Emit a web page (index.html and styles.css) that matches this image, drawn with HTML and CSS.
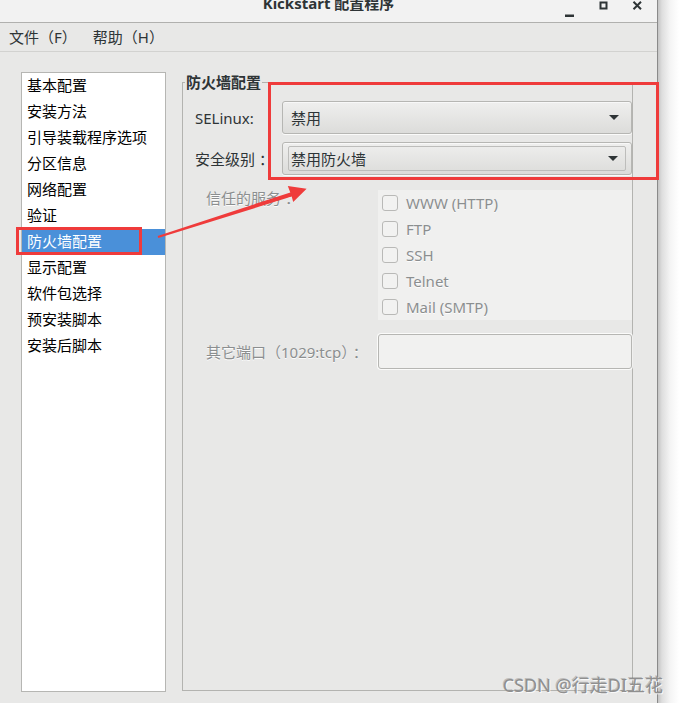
FILE: index.html
```html
<!DOCTYPE html>
<html lang="zh-CN">
<head>
<meta charset="utf-8">
<title>Kickstart 配置程序</title>
<link rel="stylesheet" href="styles.css">
</head>
<body>
<div class="screen">
  <div class="window">
    <div class="titlebar">
      <span></span>
      <span class="title">Kickstart 配置程序</span>
      <div class="controls">
        <svg width="82" height="22" viewBox="0 0 82 22">
          <rect x="3" y="14.5" width="9" height="2.5" fill="#2e3436"/>
          <rect x="38.5" y="2.5" width="6" height="6" fill="none" stroke="#2e3436" stroke-width="2"/>
          <path d="M71.5 1.8 L79 9.2 M79 1.8 L71.5 9.2" stroke="#2e3436" stroke-width="2"/>
        </svg>
      </div>
    </div>
    <div class="menubar">
      <span class="menu">文件（F）</span>
      <span class="menu">帮助（H）</span>
    </div>
    <div class="content">
      <ul class="sidebar">
        <li>基本配置</li>
        <li>安装方法</li>
        <li>引导装载程序选项</li>
        <li>分区信息</li>
        <li>网络配置</li>
        <li>验证</li>
        <li class="selected">防火墙配置</li>
        <li>显示配置</li>
        <li>软件包选择</li>
        <li>预安装脚本</li>
        <li>安装后脚本</li>
      </ul>
      <fieldset class="frame">
        <legend>防火墙配置</legend>
        <div class="top-grid">
          <span class="label">SELinux:</span>
          <div class="combo"><span class="combo-text">禁用</span><span class="caret"></span></div>
          <span class="label">安全级别<span class="colon">：</span></span>
          <div class="combo focused"><div class="focus-ring"><span class="combo-text">禁用防火墙</span><span class="caret"></span></div></div>
        </div>
        <div class="bottom-grid">
          <span class="label disabled services-label">信任的服务<span class="colon">：</span></span>
          <div class="checklist">
            <div class="check"><span class="box"></span><span class="disabled">WWW (HTTP)</span></div>
            <div class="check"><span class="box"></span><span class="disabled">FTP</span></div>
            <div class="check"><span class="box"></span><span class="disabled">SSH</span></div>
            <div class="check"><span class="box"></span><span class="disabled">Telnet</span></div>
            <div class="check"><span class="box"></span><span class="disabled">Mail (SMTP)</span></div>
          </div>
          <span class="label disabled port-label">其它端口（1029:tcp）<span class="colon">：</span></span>
          <div class="entry"></div>
        </div>
      </fieldset>
    </div>
  </div>
  <div class="shadow"></div>
  <svg class="annotation" width="679" height="703" viewBox="0 0 679 703">
    <rect x="17.5" y="228.5" width="123" height="25" fill="none" stroke="#ef3b3b" stroke-width="3"/>
    <rect x="269.5" y="83.5" width="388" height="95" fill="none" stroke="#ef3b3b" stroke-width="3"/>
    <polygon points="157.7,236.1 290.3,192.4 287.8,185.9 306.6,188.7 293.2,202.1 291.7,196.6 158.3,237.9" fill="#ef3b3b"/>
  </svg>
  <div class="watermark">CSDN @行走DI五花</div>
</div>
</body>
</html>
```
FILE: styles.css
```css
* { box-sizing: border-box; }

html, body {
  margin: 0;
  padding: 0;
  background: #ffffff;
}

body {
  font-family: "Noto Sans", "Noto Sans CJK SC", sans-serif;
  font-size: 15px;
  color: #2e3436;
}

.screen {
  position: relative;
  width: 679px;
  height: 703px;
  display: flex;
  overflow: hidden;
}

.window {
  width: 658px;
  height: 703px;
  border-right: 1px solid #8a8a8a;
  background: #e8e8e7;
  display: flex;
  flex-direction: column;
}

.shadow {
  flex: 1;
  background: linear-gradient(to right, #c4c4c4 0, #dedede 4px, #f4f4f4 12px, #ffffff 21px);
}

.titlebar {
  height: 23px;
  background: #f2f2f2;
  border-bottom: 1px solid #b0b0ae;
  display: grid;
  grid-template-columns: 1fr auto 1fr;
  align-items: start;
}

.title {
  font-weight: bold;
  font-size: 15px;
  line-height: 15px;
  margin-top: -4px;
  color: #2e3436;
  white-space: nowrap;
}

.controls {
  display: flex;
  justify-content: flex-end;
  padding-right: 13px;
}

.menubar {
  height: 29px;
  border-bottom: 1px solid #d2d2d0;
  display: flex;
  align-items: center;
  padding-left: 9px;
  padding-bottom: 1px;
}

.menu {
  margin-right: 16px;
  color: #2e3436;
}

.content {
  flex: 1;
  display: flex;
  gap: 16px;
  padding: 20px 24px 11px 21px;
}

.sidebar {
  list-style: none;
  margin: 0;
  padding: 0;
  width: 145px;
  background: #ffffff;
  border: 1px solid #b6b6b3;
}

.sidebar li {
  height: 26px;
  line-height: 24px;
  padding-left: 5px;
  color: #000000;
  white-space: nowrap;
}

.sidebar li.selected {
  background: #4a90d9;
  color: #ffffff;
}

.frame {
  flex: 1;
  min-width: 0;
  margin: 2px 0 1px 0;
  padding: 0;
  border: 1px solid #b3b3b0;
}

.frame legend {
  margin-left: 2px;
  padding: 0 1px;
  font-weight: bold;
  font-size: 15px;
  line-height: 17px;
  color: #2e3436;
}

.top-grid {
  display: grid;
  grid-template-columns: 87px 1fr;
  row-gap: 8px;
  align-items: center;
  padding: 10px 0 0 12px;
}

.label {
  white-space: nowrap;
  color: #2e3436;
}

.colon {
  margin-left: 4px;
}

.combo {
  height: 33px;
  border: 1px solid #b6b6b3;
  border-radius: 3px;
  background: linear-gradient(#efefee, #dcdcda);
  box-shadow: inset 0 1px #f8f8f8, 0 1px rgba(255,255,255,0.8);
  display: flex;
  align-items: center;
  padding: 0 12px 0 8px;
}

.combo.focused {
  padding: 3px 5px 3px 5px;
  align-items: stretch;
}

.focus-ring {
  flex: 1;
  border: 1px solid #bdbdbb;
  border-radius: 2px;
  display: flex;
  align-items: center;
  padding: 0 7px 0 2px;
}

.combo-text {
  flex: 1;
  color: #2e3436;
}

.caret {
  width: 0;
  height: 0;
  border-left: 5px solid transparent;
  border-right: 5px solid transparent;
  border-top: 5px solid #2e3436;
}

.bottom-grid {
  display: grid;
  grid-template-columns: 172px 1fr;
  row-gap: 14px;
  align-items: center;
  padding: 15px 0 0 23px;
}

.disabled {
  color: #8b8e8f;
  text-shadow: 0 1px rgba(255,255,255,0.9);
}

.services-label {
  align-self: start;
  line-height: 18px;
  margin-top: -1px;
}

.checklist {
  background: #f0f0ef;
  padding-left: 4px;
}

.check {
  height: 26px;
  display: flex;
  align-items: center;
  gap: 8px;
}

.box {
  width: 16px;
  height: 16px;
  border: 1px solid #b9b9b7;
  border-radius: 3px;
  background: #f2f2f1;
}

.entry {
  height: 35px;
  border: 1px solid #b6b6b3;
  border-radius: 3px;
  background: #f1f1f0;
  box-shadow: 0 0 0 1px rgba(255,255,255,0.8);
}

.annotation {
  position: absolute;
  left: 0;
  top: 0;
  pointer-events: none;
}

.watermark {
  position: absolute;
  right: 16px;
  bottom: 8px;
  font-size: 18px;
  line-height: 20px;
  color: #8f8f8f;
  text-shadow: 1px 1px 0 rgba(255,255,255,0.8), -1px -1px 0 rgba(110,110,110,0.35);
  white-space: nowrap;
}
```
